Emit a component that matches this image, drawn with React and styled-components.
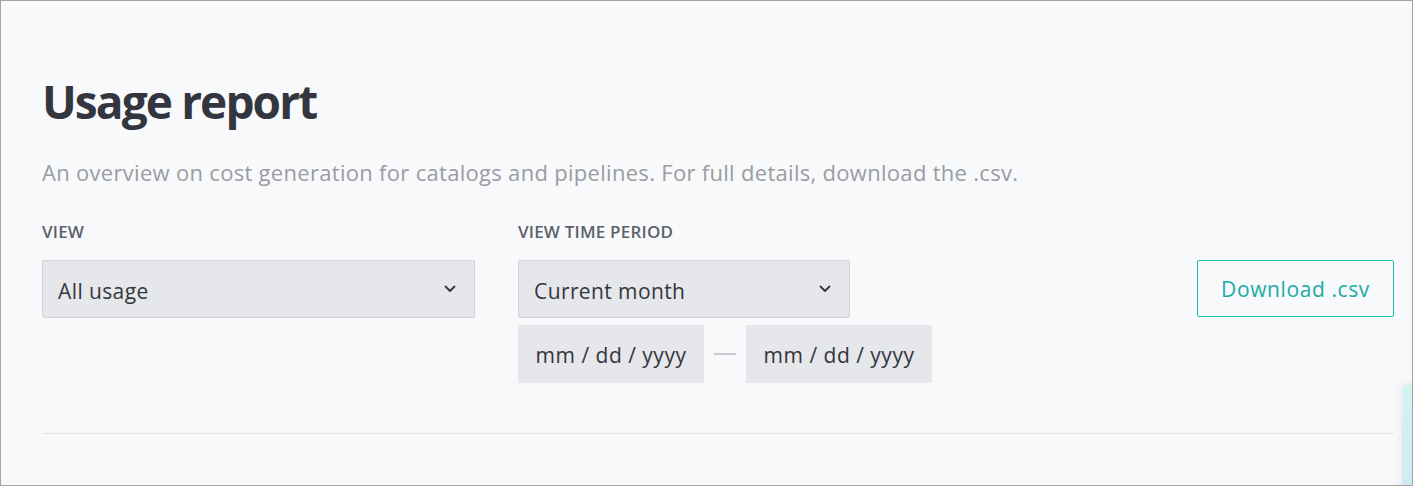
import React from "react";
import styled, { createGlobalStyle } from "styled-components";

const GlobalStyle = createGlobalStyle`
  html, body {
    margin: 0;
    padding: 0;
  }
  body {
    font-family: "Open Sans", "Noto Sans", sans-serif;
    background: #ffffff;
  }
  * {
    box-sizing: border-box;
  }
`;

const Frame = styled.div`
  position: relative;
  width: 1413px;
  height: 486px;
  border: 1px solid #a3a3a3;
  background: #f8f9fb;
  overflow: hidden;
`;

const Page = styled.main`
  padding: 70px 18px 0 41px;
`;

const Title = styled.h1`
  margin: 0;
  font-size: 46px;
  line-height: 60px;
  font-weight: 700;
  color: #33363e;
  letter-spacing: -1.9px;
`;

const Subtitle = styled.p`
  margin: 27px 0 0;
  font-size: 22px;
  line-height: 28px;
  letter-spacing: 0.3px;
  color: #9a9ca2;
`;

const Controls = styled.div`
  display: flex;
  align-items: flex-start;
  margin-top: 35px;
`;

const Field = styled.div`
  display: flex;
  flex-direction: column;
  width: ${(p) => p.width}px;
  margin-right: ${(p) => p.gap || 0}px;
`;

const Label = styled.label`
  font-size: 17px;
  line-height: 22px;
  font-weight: 600;
  letter-spacing: 0.2px;
  color: #5d616c;
  text-transform: uppercase;
  margin-bottom: 17px;
`;

const Select = styled.div`
  display: flex;
  align-items: center;
  justify-content: space-between;
  width: ${(p) => (p.width ? `${p.width}px` : "100%")};
  height: 58px;
  padding: 3px 18px 0 15px;
  background: #e6e7ea;
  border: 1px solid #d2d4d8;
  border-radius: 2px;
  font-size: 21px;
  letter-spacing: 0.4px;
  color: #33363e;

  svg {
    margin-top: -3px;
  }
`;

const DateRow = styled.div`
  display: flex;
  align-items: center;
  margin-top: 7px;
`;

const DateInput = styled.div`
  display: flex;
  align-items: center;
  justify-content: center;
  width: 186px;
  height: 58px;
  padding-top: 2px;
  background: #e6e7ea;
  font-size: 21px;
  letter-spacing: 0.5px;
  color: #33363e;
`;

const Dash = styled.span`
  width: 22px;
  height: 2px;
  margin: 0 10px;
  background: #c9cbd0;
`;

const Spacer = styled.div`
  flex: 1;
`;

const DownloadButton = styled.button`
  width: 197px;
  height: 57px;
  margin-top: 39px;
  border: 1px solid #1ebdb7;
  border-radius: 2px;
  background: transparent;
  font-family: inherit;
  font-size: 21px;
  letter-spacing: 0.6px;
  color: #18aba6;
  cursor: pointer;
`;

const Divider = styled.hr`
  margin: 50px 0 0;
  border: none;
  border-top: 1px solid #e2e3e7;
`;

const Widget = styled.div`
  position: absolute;
  right: -20px;
  top: 384px;
  width: 30px;
  height: 140px;
  border-radius: 6px;
  background: linear-gradient(180deg, #d3f3f1 0%, #d0e7f3 100%);
  box-shadow: 0 0 10px rgba(60, 80, 110, 0.12);
`;

const Chevron = () => (
  <svg width="12" height="8" viewBox="0 0 12 8" fill="none">
    <path
      d="M1.5 1.5L6 6L10.5 1.5"
      stroke="#33363e"
      strokeWidth="1.8"
      strokeLinecap="round"
      strokeLinejoin="round"
    />
  </svg>
);

export default function App() {
  return (
    <>
      <GlobalStyle />
      <Frame>
        <Page>
          <Title>Usage report</Title>
          <Subtitle>
            An overview on cost generation for catalogs and pipelines. For full
            details, download the .csv.
          </Subtitle>
          <Controls>
            <Field width={433} gap={43}>
              <Label>View</Label>
              <Select>
                All usage
                <Chevron />
              </Select>
            </Field>
            <Field width={414}>
              <Label>View time period</Label>
              <Select width={332}>
                Current month
                <Chevron />
              </Select>
              <DateRow>
                <DateInput>mm / dd / yyyy</DateInput>
                <Dash />
                <DateInput>mm / dd / yyyy</DateInput>
              </DateRow>
            </Field>
            <Spacer />
            <DownloadButton>Download .csv</DownloadButton>
          </Controls>
          <Divider />
        </Page>
        <Widget />
      </Frame>
    </>
  );
}
